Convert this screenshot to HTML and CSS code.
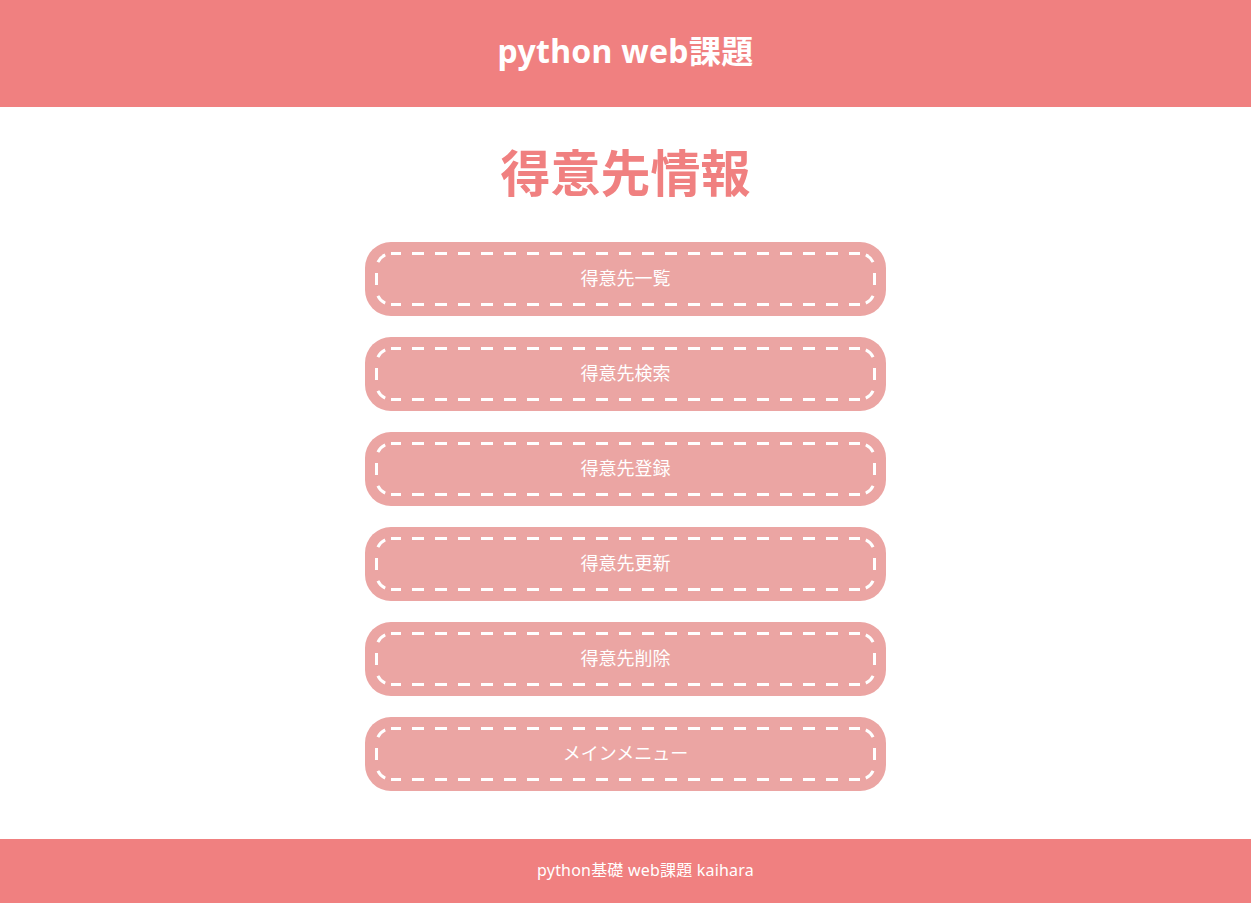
FILE: index.html
```html
<!DOCTYPE html>
<html lang="ja">
<head>
<meta charset="utf-8">
<title>得意先情報</title>
<link rel="stylesheet" href="styles.css">
</head>
<body>
<svg class="defs" aria-hidden="true">
  <defs>
    <path id="stitch-path" d="M16 1.5H26M37 1.5H49M60 1.5H72M83 1.5H95M106 1.5H118M129 1.5H141M152 1.5H164M175 1.5H187M198 1.5H210M221 1.5H233M244 1.5H256M267 1.5H279M290 1.5H302M313 1.5H325M336 1.5H348M359 1.5H371M382 1.5H394M405 1.5H417M428 1.5H440M451 1.5H463M474 1.5H485M16 52.5H26M37 52.5H49M60 52.5H72M83 52.5H95M106 52.5H118M129 52.5H141M152 52.5H164M175 52.5H187M198 52.5H210M221 52.5H233M244 52.5H256M267 52.5H279M290 52.5H302M313 52.5H325M336 52.5H348M359 52.5H371M382 52.5H394M405 52.5H417M428 52.5H440M451 52.5H463M474 52.5H485M2.9 10.2A15 15 0 0 1 10.2 2.9M490.8 2.9A15 15 0 0 1 498.1 10.2M498.1 43.8A15 15 0 0 1 490.8 51.1M10.2 51.1A15 15 0 0 1 2.9 43.8M1.5 21V33M499.5 21V33"/>
  </defs>
</svg>
<header class="site-header">
  <h1 class="site-title">python web課題</h1>
</header>
<main class="content">
  <h2 class="page-title">得意先情報</h2>
  <nav class="menu">
    <a class="menu-btn" href="#"><svg class="stitch" viewBox="0 0 501 54"><use href="#stitch-path"/></svg><span class="menu-label">得意先一覧</span></a>
    <a class="menu-btn" href="#"><svg class="stitch" viewBox="0 0 501 54"><use href="#stitch-path"/></svg><span class="menu-label">得意先検索</span></a>
    <a class="menu-btn" href="#"><svg class="stitch" viewBox="0 0 501 54"><use href="#stitch-path"/></svg><span class="menu-label">得意先登録</span></a>
    <a class="menu-btn" href="#"><svg class="stitch" viewBox="0 0 501 54"><use href="#stitch-path"/></svg><span class="menu-label">得意先更新</span></a>
    <a class="menu-btn" href="#"><svg class="stitch" viewBox="0 0 501 54"><use href="#stitch-path"/></svg><span class="menu-label">得意先削除</span></a>
    <a class="menu-btn" href="#"><svg class="stitch" viewBox="0 0 501 54"><use href="#stitch-path"/></svg><span class="menu-label">メインメニュー</span></a>
  </nav>
</main>
<footer class="site-footer">
  <p class="footer-text">python基礎 web課題 kaihara</p>
</footer>
</body>
</html>
```
FILE: styles.css
```css
html, body {
  margin: 0;
  padding: 0;
}
body {
  font-family: "Noto Sans", "Noto Sans CJK JP", sans-serif;
  background: #ffffff;
  color: #333;
  min-height: 903px;
  display: flex;
  flex-direction: column;
}
.defs {
  display: none;
}
.site-header {
  background: #f08080;
  height: 107px;
  display: flex;
  align-items: center;
  justify-content: center;
}
.site-title {
  margin: 0 0 6px;
  color: #ffffff;
  font-size: 32px;
  font-weight: 700;
  line-height: 1;
  letter-spacing: 0.3px;
}
.content {
  flex: 1;
  display: flex;
  flex-direction: column;
  align-items: center;
  padding-top: 38px;
}
.page-title {
  margin: 0;
  color: #f08080;
  font-size: 50px;
  font-weight: 700;
  line-height: 56px;
}
.menu {
  margin-top: 51px;
  display: flex;
  flex-direction: column;
  gap: 41px;
}
.menu-btn {
  position: relative;
  box-sizing: border-box;
  width: 501px;
  height: 54px;
  display: flex;
  align-items: center;
  justify-content: center;
  padding-bottom: 4px;
  background: #eba5a3;
  color: #ffffff;
  text-decoration: none;
  font-size: 18px;
  border-radius: 16px;
  box-shadow: 0 0 0 10px #eba5a3;
}
.stitch {
  position: absolute;
  left: 0;
  top: 0;
  width: 501px;
  height: 54px;
  fill: none;
  stroke: #ffffff;
  stroke-width: 3;
}
.menu-label {
  position: relative;
}
.site-footer {
  background: #f08080;
  height: 64px;
  display: flex;
  align-items: center;
  justify-content: center;
}
.footer-text {
  margin: 0 0 4px 40px;
  color: #ffffff;
  font-size: 16px;
  letter-spacing: 0.2px;
}
```
